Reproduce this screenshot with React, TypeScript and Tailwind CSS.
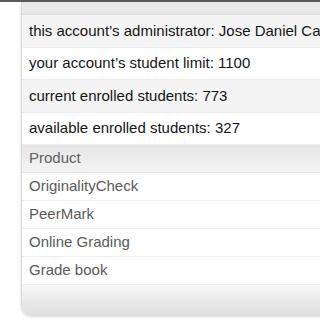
export default function App() {
  const info = [
    "this account’s administrator: Jose Daniel Castillo",
    "your account’s student limit: 1100",
    "current enrolled students: 773",
    "available enrolled students: 327",
  ];
  const products = ["OriginalityCheck", "PeerMark", "Online Grading", "Grade book"];

  return (
    <div className="w-[320px] h-[320px] bg-white overflow-hidden font-['Liberation_Sans',sans-serif]">
      <div className="h-[2px] bg-[#5a5a5a]" />
      <div className="ml-[21px] w-[340px] border-l border-[#d8d8d8] rounded-bl-[10px] shadow-[0_2px_3px_rgba(0,0,0,0.15)] overflow-hidden">
        <div className="h-[13px] bg-[#e9e9e9] border-b border-[#dddddd]" />
        {info.map((t, i) => (
          <div
            key={t}
            className={`flex items-center pl-[7px] text-[15px] text-[#151515] whitespace-nowrap border-b border-[#ececec] ${
              i % 2 === 0 ? "bg-[#f4f4f4] h-[33px]" : "bg-white h-[32px]"
            }`}
          >
            {t}
          </div>
        ))}
        <div className="h-[28px] flex items-center pl-[7px] text-[15px] text-[#606060] bg-gradient-to-b from-[#e6e6e6] to-[#f4f4f4] border-b border-[#e2e2e2]">
          Product
        </div>
        {products.map((p) => (
          <div
            key={p}
            className="h-[28px] flex items-center pl-[7px] text-[15px] text-[#5a5a5a] bg-white border-b border-[#eeeeee]"
          >
            {p}
          </div>
        ))}
        <div className="h-[30px] bg-gradient-to-b from-[#f7f7f7] to-[#dedede]" />
      </div>
    </div>
  );
}
